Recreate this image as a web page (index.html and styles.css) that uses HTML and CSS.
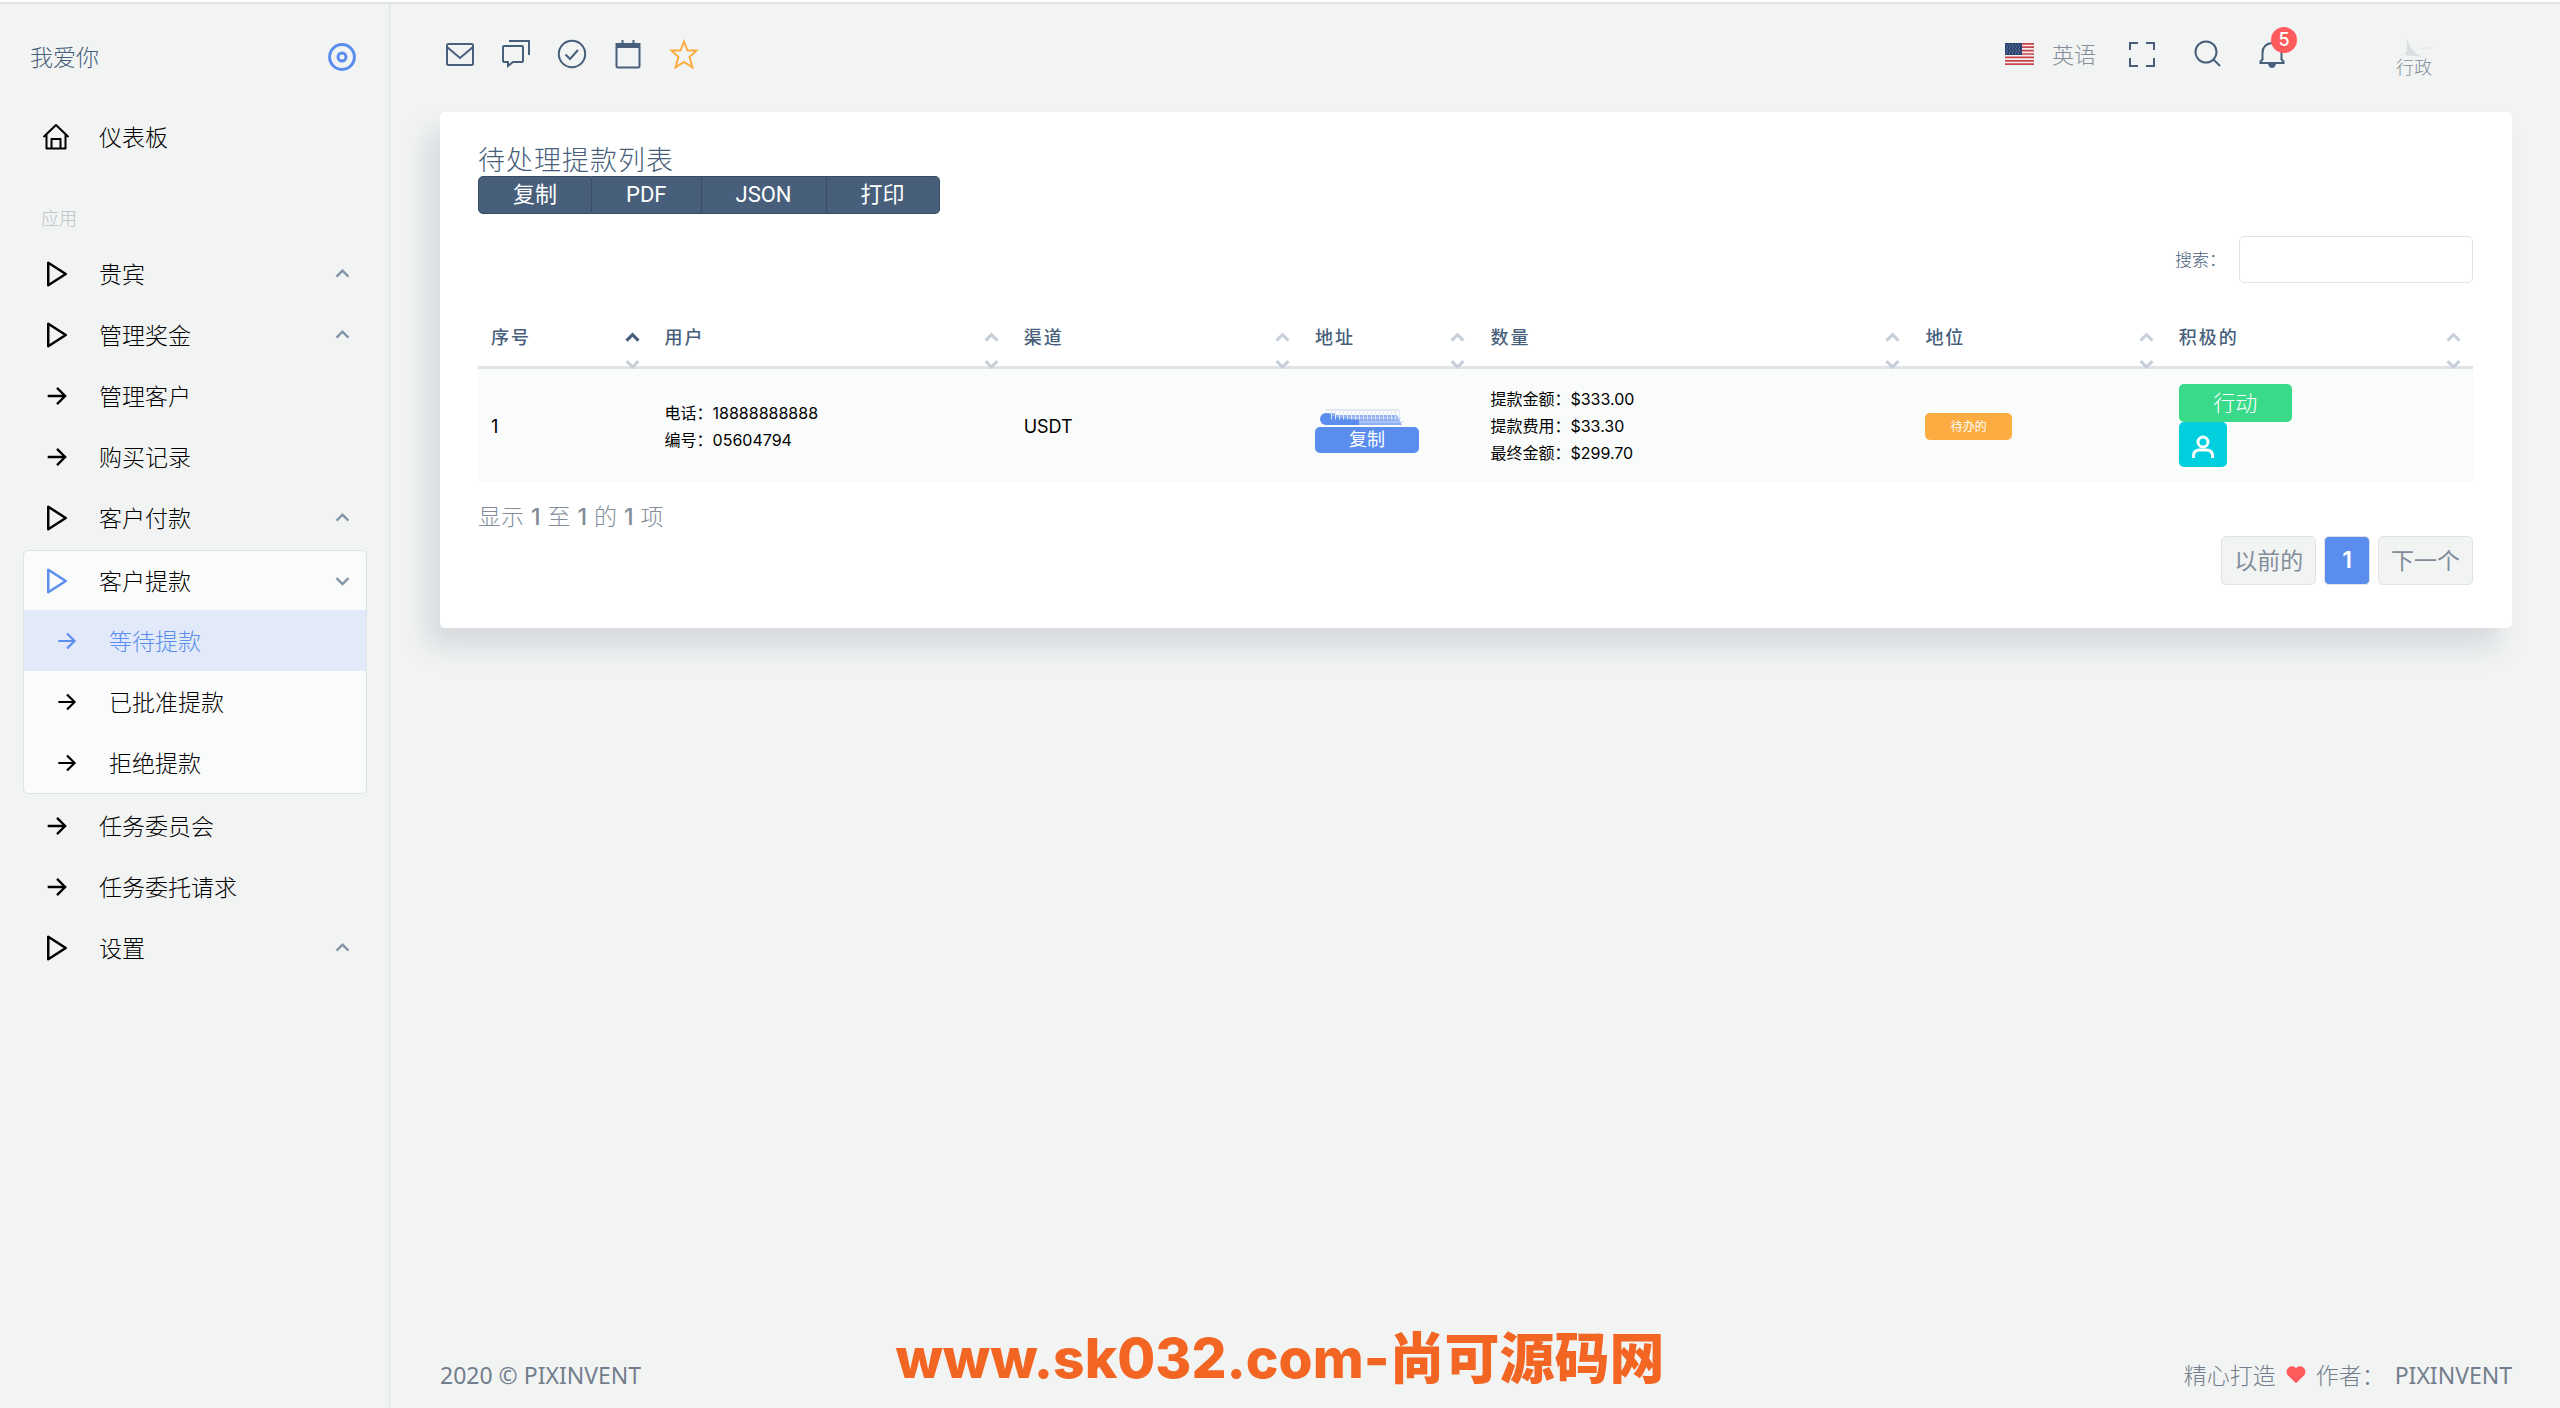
FILE: index.html
```html
<!DOCTYPE html>
<html lang="zh-CN">
<head>
<meta charset="utf-8">
<meta name="viewport" content="width=device-width, initial-scale=1">
<title>待处理提款列表</title>
<link rel="stylesheet" href="styles.css">
</head>
<body>
<svg class="defs" aria-hidden="true">
  <symbol id="i-play" viewBox="0 0 24 24"><path d="M5 3v18l14-9z" stroke-linejoin="round"/></symbol>
  <symbol id="i-arrow" viewBox="0 0 24 24"><path d="M4 12h15M12 5l7 7-7 7"/></symbol>
  <symbol id="i-up" viewBox="0 0 24 24"><path d="M4.500 16l7.500-7.500 7.500 7.500"/></symbol>
  <symbol id="i-down" viewBox="0 0 24 24"><path d="M4.500 9l7.500 7.500L19.500 9"/></symbol>
</svg>
<div class="app">
  <aside class="sidebar">
    <div class="brand">
      <a class="brand-name" href="#">我爱你</a>
      <button class="icon-btn toggle" type="button" aria-label="折叠菜单">
        <svg viewBox="0 0 28 28" width="28" height="28"><circle cx="14" cy="14" r="12.400"/><circle cx="14" cy="14" r="4"/></svg>
      </button>
    </div>
    <nav class="menu">
      <a class="item" href="#"><svg class="ico" viewBox="0 0 28 28"><path d="M1.500 14L14 2l12.500 12M4.500 12v13.500h19V12M9.500 25.500v-9.500h9v9.500" stroke-linejoin="round"/></svg>仪表板</a>
      <h2 class="menu-title">应用</h2>
      <a class="item" href="#"><svg class="ico play"><use href="#i-play"/></svg>贵宾<svg class="chev"><use href="#i-up"/></svg></a>
      <a class="item" href="#"><svg class="ico play"><use href="#i-play"/></svg>管理奖金<svg class="chev"><use href="#i-up"/></svg></a>
      <a class="item" href="#"><svg class="ico arrow"><use href="#i-arrow"/></svg>管理客户</a>
      <a class="item" href="#"><svg class="ico arrow"><use href="#i-arrow"/></svg>购买记录</a>
      <a class="item" href="#"><svg class="ico play"><use href="#i-play"/></svg>客户付款<svg class="chev"><use href="#i-up"/></svg></a>
      <div class="group">
        <a class="item head" href="#"><svg class="ico play"><use href="#i-play"/></svg>客户提款<svg class="chev"><use href="#i-down"/></svg></a>
        <a class="item sub active" href="#"><svg class="ico arrow"><use href="#i-arrow"/></svg>等待提款</a>
        <a class="item sub" href="#"><svg class="ico arrow"><use href="#i-arrow"/></svg>已批准提款</a>
        <a class="item sub" href="#"><svg class="ico arrow"><use href="#i-arrow"/></svg>拒绝提款</a>
      </div>
      <a class="item" href="#"><svg class="ico arrow"><use href="#i-arrow"/></svg>任务委员会</a>
      <a class="item" href="#"><svg class="ico arrow"><use href="#i-arrow"/></svg>任务委托请求</a>
      <a class="item" href="#"><svg class="ico play"><use href="#i-play"/></svg>设置<svg class="chev"><use href="#i-up"/></svg></a>
    </nav>
  </aside>

  <div class="page">
    <header class="navbar">
      <div class="shortcuts">
        <a href="#" aria-label="邮件"><svg viewBox="0 0 30 30"><rect x="2" y="5" width="26" height="21" rx="1.500"/><path d="M2 8l13 11L28 8"/></svg></a>
        <a href="#" aria-label="聊天"><svg viewBox="0 0 30 30"><path d="M3 7h18q1 0 1 1v14q0 1-1 1h-9l-5 4v-4H3q-1 0-1-1V8q0-1 1-1zM8 2h20v14"/></svg></a>
        <a href="#" aria-label="待办"><svg viewBox="0 0 30 30"><circle cx="15" cy="15" r="13.200"/><path d="M8.500 15.500l4.500 4.500 8-9"/></svg></a>
        <a href="#" aria-label="日历"><svg viewBox="0 0 30 30"><path d="M3.500 5h23v22q0 1.500-1.500 1.500H5q-1.500 0-1.500-1.500zM9.500 1v4M20.500 1v4"/><path class="solid" d="M3 4h24v5H3z"/></svg></a>
        <a class="star" href="#" aria-label="收藏"><svg viewBox="0 0 30 30"><path d="M15 2.500l3.500 9h9l-7 6.500 3 10.500-8.500-5.500-8.500 5.500 3-10.500-7-6.500h9z"/></svg></a>
      </div>
      <div class="tools">
        <a class="lang" href="#">
          <svg viewBox="0 0 29 22" width="29" height="22"><path fill="#f4eeee" d="M0 0h29v22H0z"/><path stroke="#c8454b" stroke-width="1.700" d="M0 .8h29M0 4.200h29M0 7.600h29M0 11h29M0 14.400h29M0 17.800h29M0 21.200h29"/><path fill="#2b4470" d="M0 0h17v12H0z"/><path stroke="#7d8fb0" stroke-width="1" stroke-dasharray="1 2" d="M1 2h15M2 4h14M1 6h15M2 8h14M1 10h15"/></svg>
          英语
        </a>
        <button class="icon-btn" type="button" aria-label="全屏"><svg viewBox="0 0 28 28"><path d="M2 10V3h8M18 3h8v7M26 18v8h-8M10 26H2v-8"/></svg></button>
        <button class="icon-btn" type="button" aria-label="搜索"><svg viewBox="0 0 28 28"><circle cx="12" cy="12" r="10.500"/><path d="M19 19l7 7"/></svg></button>
        <button class="icon-btn bell" type="button" aria-label="通知"><svg viewBox="0 0 28 28"><path d="M2.500 23v-1.500l2-2V13q0-9 9.500-10 9.500 1 9.500 10v6.500l2 2V23z"/><path class="solid" d="M10 24h8q-1 4-4 4t-4-4z"/></svg><span class="badge">5</span></button>
        <a class="user" href="#"><svg class="avatar" viewBox="0 0 40 26" aria-hidden="true"><path fill="#dcdfe1" d="M11 2q2 13 16 19L9 19l2-5z"/><path fill="#e9ebec" d="M24 12q7-3 13 0l-10 2z"/></svg>行政</a>
      </div>
    </header>

    <main class="card">
      <h1>待处理提款列表</h1>
      <div class="exports">
        <button type="button">复制</button><button type="button">PDF</button><button type="button">JSON</button><button type="button">打印</button>
      </div>
      <div class="filter">
        <label for="q">搜索：</label>
        <input id="q" type="search">
      </div>
      <table>
        <colgroup><col class="c1"><col class="c2"><col class="c3"><col class="c4"><col class="c5"><col class="c6"><col></colgroup>
        <thead>
          <tr>
            <th scope="col">序号<span class="sort asc"><svg><use href="#i-up"/></svg><svg><use href="#i-down"/></svg></span></th>
            <th scope="col">用户<span class="sort"><svg><use href="#i-up"/></svg><svg><use href="#i-down"/></svg></span></th>
            <th scope="col">渠道<span class="sort"><svg><use href="#i-up"/></svg><svg><use href="#i-down"/></svg></span></th>
            <th scope="col">地址<span class="sort"><svg><use href="#i-up"/></svg><svg><use href="#i-down"/></svg></span></th>
            <th scope="col">数量<span class="sort"><svg><use href="#i-up"/></svg><svg><use href="#i-down"/></svg></span></th>
            <th scope="col">地位<span class="sort"><svg><use href="#i-up"/></svg><svg><use href="#i-down"/></svg></span></th>
            <th scope="col">积极的<span class="sort"><svg><use href="#i-up"/></svg><svg><use href="#i-down"/></svg></span></th>
          </tr>
        </thead>
        <tbody>
          <tr>
            <td>1</td>
            <td class="small">电话：18888888888<br>编号：05604794</td>
            <td>USDT</td>
            <td>
              <div class="address">
                <svg class="masked" viewBox="0 0 86 16" width="86" height="16" aria-hidden="true"><path fill="#8fb0f3" d="M7 4h8l3 2h60l5 10H7z"/><circle cx="7" cy="10" r="6" fill="#5a8dee"/><path fill="#5a8dee" d="M8 5l12 4 20 2v5H8z"/><path stroke="#e3ebfb" stroke-width="9" stroke-dasharray="1 3" d="M12 6h70"/><path stroke="#c9d8f8" stroke-width="1" d="M30 9h52M40 13h44"/><path stroke="#e4e8ee" stroke-width="2" d="M6 1h74"/></svg>
                <button class="copy" type="button">复制</button>
              </div>
            </td>
            <td class="small">提款金额：$333.00<br>提款费用：$33.30<br>最终金额：$299.70</td>
            <td><span class="status">待办的</span></td>
            <td class="cell-actions">
              <div class="actions">
                <button class="act" type="button">行动</button>
                <button class="profile" type="button" aria-label="用户资料"><svg viewBox="0 0 24 24" width="24" height="24"><circle cx="12" cy="7" r="5"/><path d="M2.500 23v-2q0-6 6-6h7q6 0 6 6v2"/></svg></button>
              </div>
            </td>
          </tr>
        </tbody>
      </table>
      <p class="info">显示 <b>1</b> 至 <b>1</b> 的 <b>1</b> 项</p>
      <nav class="pager" aria-label="分页">
        <a href="#">以前的</a><a class="current" href="#" aria-current="page">1</a><a href="#">下一个</a>
      </nav>
    </main>

    <footer class="footer">
      <span class="latin">2020 © PIXINVENT</span>
      <span class="made">精心打造 <svg viewBox="0 0 24 24" width="20" height="20"><path d="M12 22L2.500 12.500a6 6 0 0 1 9.500-9 6 6 0 0 1 9.500 9z"/></svg> 作者： <a class="latin" href="#">PIXINVENT</a></span>
    </footer>
  </div>
</div>
<div class="watermark">www.sk032.com-尚可源码网</div>
</body>
</html>
```

FILE: styles.css
```css
* { box-sizing: border-box; }

body {
  margin: 0;
  background: #f2f4f4;
  border-top: 2px solid #fff;
  color: #727e8c;
  font-family: "Noto Sans", "Noto Sans CJK SC", sans-serif;
  font-size: 22px;
  font-weight: 300;
  line-height: 30px;
}

a { color: inherit; text-decoration: none; }
button { font: inherit; color: inherit; border: 0; padding: 0; cursor: pointer; }
svg { fill: none; stroke: currentColor; flex: none; }
.solid { fill: currentColor; stroke: none; }
.defs { display: none; }
.latin { font-weight: 400; }

.app {
  display: flex;
  min-height: calc(100vh - 2px);
  border-top: 2px solid #e0e3e3;
}

/* Sidebar */
.sidebar {
  flex: 0 0 390px;
  border-right: 1px solid #dfe3e7;
  padding: 29px 22px 0 23px;
  font-size: 23px;
}
.brand {
  display: flex;
  align-items: center;
  justify-content: space-between;
  height: 48px;
  padding: 0 11px 0 7px;
  color: #475f7b;
}
.icon-btn { display: flex; background: none; color: #475f7b; }
.toggle { color: #5a8dee; }
.toggle svg { stroke-width: 3; }

.menu { display: flex; flex-direction: column; padding-top: 25px; }
.item {
  display: flex;
  align-items: center;
  height: 61px;
  padding: 0 15px 0 19px;
  color: #000;
  white-space: nowrap;
}
.ico { width: 28px; height: 28px; margin-right: 29px; stroke-width: 2; }
.ico.play { width: 30px; height: 34px; margin-right: 27px; }
.ico.arrow { width: 30px; margin-right: 27px; stroke-width: 2; }
.chev {
  width: 19px;
  height: 19px;
  margin-left: auto;
  stroke-width: 3;
  color: #8494a7;
}
.menu-title {
  margin: 33px 0 7px;
  padding-left: 18px;
  font-size: 18px;
  font-weight: 300;
  line-height: 36px;
  color: #bac0c7;
}
.group {
  margin: 2px 0 1px;
  border: 1px solid #dfe3e7;
  border-radius: 5px;
  background: #fafbfb;
}
.group .head { height: 59px; padding: 0 14px 0 18px; }
.head .play { color: #5a8dee; }
.item.sub { padding-left: 30px; }
.sub .ico.arrow { width: 26px; height: 26px; margin-right: 29px; }
.item.active { background: #e2eafa; color: #5a8dee; }

/* Main column */
.page {
  flex: 1;
  min-width: 0;
  display: flex;
  flex-direction: column;
  padding: 0 48px 0 50px;
}
.navbar {
  display: flex;
  justify-content: space-between;
  align-items: center;
  height: 100px;
  color: #475f7b;
}
.shortcuts { display: flex; gap: 26px; padding: 0 5px; }
.shortcuts a { display: flex; }
.shortcuts svg { width: 30px; height: 30px; stroke-width: 2; }
.star { color: #fdac41; }
.tools { display: flex; align-items: center; padding-right: 80px; }
.tools .icon-btn { margin-left: 38px; }
.tools .icon-btn svg { width: 28px; height: 28px; stroke-width: 2; }
.lang { display: flex; align-items: center; gap: 18px; color: #828d99; margin-right: -6px; }
.lang svg { stroke: none; }
.tools .bell { position: relative; margin-left: 36px; }
.badge {
  position: absolute;
  top: -13px;
  left: 13px;
  width: 26px;
  height: 26px;
  border-radius: 50%;
  background: #ff5b5c;
  color: #fff;
  font-family: Inter, sans-serif;
  font-size: 18px;
  font-weight: 500;
  line-height: 26px;
  text-align: center;
}
.user { position: relative; margin-left: 110px; padding-top: 26px; font-size: 18px; color: #828d99; }
.avatar { position: absolute; top: 10px; left: 0; width: 40px; height: 26px; stroke: none; z-index: -1; }

.card {
  margin-top: 8px;
  padding: 31px 39px 43px 38px;
  border-radius: 5px;
  background: #fff;
  box-shadow: -13px 19px 29px rgba(25, 42, 70, .13);
}
.card h1 {
  margin: 0;
  font-size: 27px;
  font-weight: 300;
  letter-spacing: 1px;
  line-height: 33px;
  color: #475f7b;
}
.exports { display: flex; width: max-content; }
.exports button {
  height: 38px;
  padding: 0 34px;
  border: 1px solid #394c62;
  border-left-width: 0;
  background: #475f7b;
  color: #fff;
  font-family: Roboto, "Noto Sans CJK SC", sans-serif;
  font-weight: 400;
}
.exports button:first-child { border-left-width: 1px; border-radius: 5px 0 0 5px; }
.exports button:last-child { border-radius: 0 5px 5px 0; }

.filter { display: flex; justify-content: flex-end; align-items: center; gap: 13px; margin-top: 22px; }
.filter label { font-size: 17px; color: #475f7b; }
.filter input {
  width: 234px;
  height: 47px;
  padding: 0 12px;
  border: 1px solid #dfe3e7;
  border-radius: 5px;
  background: #fff;
  font: inherit;
}

table {
  width: 100%;
  margin-top: 25px;
  border-collapse: separate;
  border-spacing: 0;
  table-layout: fixed;
}
.c1 { width: 8.7%; }
.c2 { width: 18%; }
.c3 { width: 14.6%; }
.c4 { width: 8.8%; }
.c5 { width: 21.8%; }
.c6 { width: 12.7%; }
th {
  position: relative;
  height: 61px;
  padding: 0 13px;
  border-bottom: 3px solid #dfe3e7;
  color: #475f7b;
  font-size: 18px;
  font-weight: 500;
  letter-spacing: 2px;
  text-align: left;
}
.sort {
  position: absolute;
  top: 20px;
  right: 10px;
  display: flex;
  flex-direction: column;
  gap: 7px;
  color: #c7cfd8;
}
.sort svg { width: 19px; height: 19px; stroke-width: 4; }
.asc svg:first-child { color: #475f7b; }
td {
  height: 113px;
  padding: 2px 13px 0;
  background: #fafbfb;
  color: #000;
  font-family: Inter, "Noto Sans CJK SC", sans-serif;
  font-size: 18px;
  font-weight: 400;
}
td.small { font-size: 16px; line-height: 27px; }
td.cell-actions { padding-top: 0; }
.address { display: flex; flex-direction: column; align-items: flex-start; gap: 2px; padding-top: 8px; }
.masked { margin-left: 4px; stroke: none; }
.copy, .act, .profile, .status { border-radius: 5px; color: #fff; }
.copy { width: 104px; height: 26px; background: #5a8dee; line-height: 26px; }
.status {
  display: block;
  width: 87px;
  background: #fdac41;
  font-size: 12px;
  line-height: 27px;
  text-align: center;
}
.actions { display: flex; flex-direction: column; align-items: flex-start; }
.act { width: 113px; height: 38px; background: #39da8a; font-size: 22px; font-weight: 300; }
.profile {
  display: flex;
  align-items: center;
  justify-content: center;
  width: 48px;
  height: 45px;
  padding-top: 4px;
  background: #00cfdd;
}
.profile svg { stroke-width: 3; }

.info { margin: 19px 0 4px; font-size: 23px; color: #828d99; }
.info b { margin: 0 1px; font-family: Inter, sans-serif; font-weight: 500; }
.pager { display: flex; justify-content: flex-end; gap: 8px; }
.pager a {
  height: 49px;
  padding: 0 12px;
  border: 1px solid #dfe3e7;
  border-radius: 5px;
  background: #f2f4f4;
  color: #828d99;
  font-size: 23px;
  font-weight: 400;
  line-height: 46px;
}
.pager .current {
  padding: 0 17px;
  background: #5a8dee;
  color: #fff;
  font-family: Inter, sans-serif;
  font-weight: 600;
}

.footer {
  display: flex;
  justify-content: space-between;
  margin-top: auto;
  padding: 48px 0 18px;
  font-size: 23px;
}
.made { display: flex; align-items: center; gap: 10px; }
.made svg { fill: #ff5b5c; stroke: none; }

.watermark {
  position: fixed;
  right: 0;
  bottom: 18px;
  left: 0;
  color: #f26522;
  font-family: Inter, "Noto Sans CJK SC", sans-serif;
  font-size: 55px;
  font-weight: 800;
  line-height: 64px;
  text-align: center;
  pointer-events: none;
}
```
